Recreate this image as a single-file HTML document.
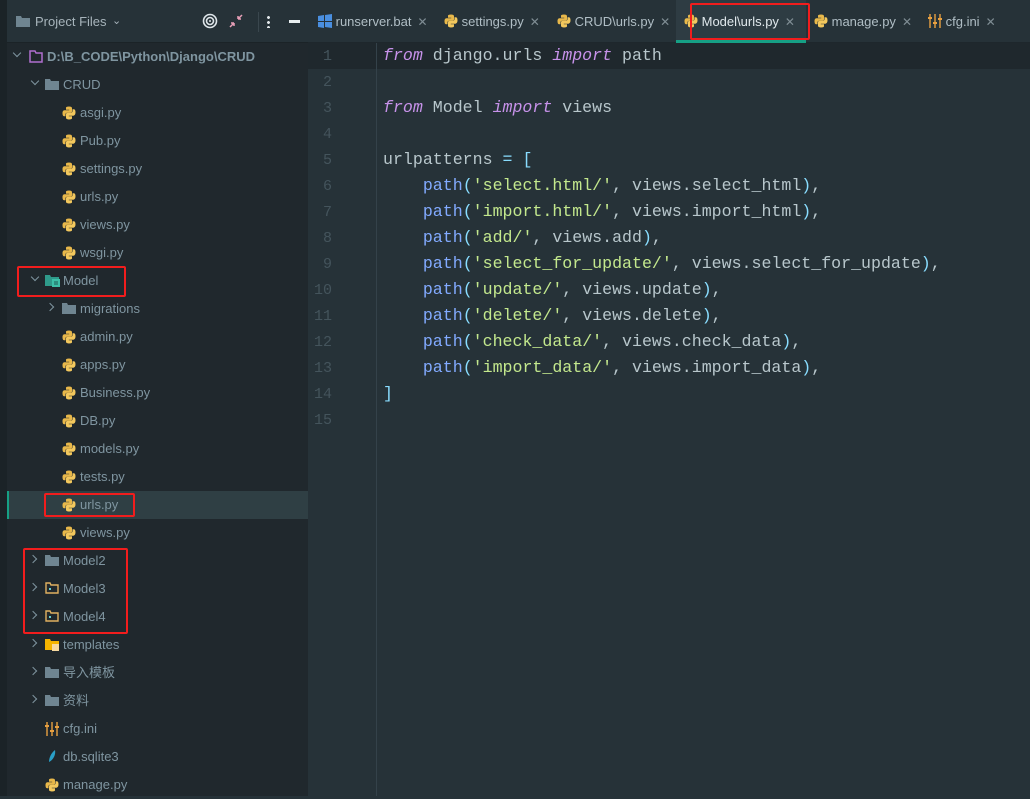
<!DOCTYPE html>
<html><head><meta charset="utf-8"><style>
*{margin:0;padding:0;box-sizing:border-box}
body{width:1030px;height:796px;background:#263238;overflow:hidden;position:relative;font-family:"Liberation Sans","Noto Sans CJK SC",sans-serif}
#strip{position:absolute;left:0;top:0;width:7px;height:796px;background:#1b2327}
#side{position:absolute;left:7px;top:0;width:301px;height:796px;background:#20282d}
#head{position:absolute;left:7px;top:0;width:301px;height:43px;background:#263238;border-bottom:1px solid #1b2327;color:#a7b4bb;font-size:13px}
.row{position:absolute;left:7px;width:301px;height:28px;font-size:13px;color:#7f95a0;line-height:28px}
.row span.t{position:absolute;top:0}
.chev{position:absolute;top:9px;width:6px;height:6px;border-right:1.4px solid #7f95a0;border-bottom:1.4px solid #7f95a0}
.down{transform:rotate(45deg);top:7px}
.right{transform:rotate(-45deg)}
.ic{position:absolute;top:7px}
#tabs{position:absolute;left:308px;top:0;width:722px;height:43px;background:#263238;border-bottom:1px solid #1e272c;font-size:13px;color:#b0bec5}
.tab{position:absolute;top:0;height:43px;line-height:43px}
.x{color:#7f8d94;margin-left:6px;font-size:12px}
#gutter{position:absolute;left:308px;top:43px;width:68px;height:753px;background:#263238}
#vline{position:absolute;left:376px;top:43px;width:1px;height:753px;background:#34424a}
.ln{position:absolute;left:308px;width:24px;text-align:right;font:15px "Liberation Mono",monospace;color:#44545c}
.code{position:absolute;left:383px;font:16.6px "Liberation Mono",monospace;color:#b8c7cc;white-space:pre}
.k{color:#c792ea;font-style:italic}.f{color:#82aaff}.s{color:#c3e88d}.p{color:#89ddff}
.red{position:absolute;border:2px solid #f21d1d;border-radius:2px}
</style></head><body>
<div id="strip"></div>
<div id="side"></div>
<div class="row" style="top:491px;background:#2f3f44;border-left:2px solid #16a085"></div>
<div id="head">
<svg style="position:absolute;left:9px;top:15px" width="14" height="12"><path d="M0 1h5l1 2h8v9H0z" fill="#6f8591"/></svg>
<span style="position:absolute;left:28px;top:14px">Project Files</span>
<span style="position:absolute;left:105px;top:14px;font-size:11px">⌄</span>
<svg style="position:absolute;left:195px;top:13px" width="16" height="16"><circle cx="8" cy="8" r="6.5" fill="none" stroke="#dfe6ea" stroke-width="1.6"/><circle cx="8" cy="8" r="3.5" fill="none" stroke="#dfe6ea" stroke-width="1.6"/><circle cx="8" cy="8" r="1" fill="#dfe6ea"/></svg>
<svg style="position:absolute;left:222px;top:14px" width="14" height="14"><path d="M1 13L5 9M5 9H2M5 9v3M13 1L9 5M9 5h3M9 5V2" stroke="#e8a0b8" stroke-width="1.5" fill="none"/></svg>
<div style="position:absolute;left:251px;top:12px;width:1px;height:20px;background:#3a474e"></div>
<div style="position:absolute;left:260px;top:15px;width:3px;height:13px;background:radial-gradient(circle,#e0e6e9 1.3px,transparent 1.6px) 0 0/3px 5px"></div>
<div style="position:absolute;left:282px;top:20px;width:11px;height:3px;background:#e8eef0"></div>
</div>

<div class="row" style="top:43px;background:#20282d"><div class="chev down" style="left:7px"></div>
<svg class="ic" style="left:22px" width="14" height="13"><path d="M1 1h5l1 2h6v9H1z" fill="none" stroke="#b06fd0" stroke-width="1.5"/></svg>
<span class="t" style="left:40px;font-weight:bold;color:#7f95a0">D:\B_CODE\Python\Django\CRUD</span></div>

<div class="row" style="top:71px"><div class="chev down" style="left:25px"></div>
<svg class="ic" style="left:38px" width="14" height="12"><path d="M0 1h5l1 2h8v9H0z" fill="#6f8591"/></svg><span class="t" style="left:56px">CRUD</span></div>

<div id="rows"></div>

<div class="row" style="top:267px"><div class="chev down" style="left:25px"></div>
<svg class="ic" style="left:38px" width="16" height="13"><path d="M0 1h5l1 2h8v9H0z" fill="#2f9a8a"/><rect x="7" y="5" width="8" height="8" fill="#3cc0a8"/><path d="M9 8h4M9 10h4" stroke="#1e5a55"/></svg><span class="t" style="left:56px">Model</span></div>

<div class="row" style="top:295px"><div class="chev right" style="left:40px"></div>
<svg class="ic" style="left:55px" width="14" height="12"><path d="M0 1h5l1 2h8v9H0z" fill="#6f8591"/></svg><span class="t" style="left:73px">migrations</span></div>

<div class="row" style="top:547px"><div class="chev right" style="left:23px"></div>
<svg class="ic" style="left:38px" width="14" height="12"><path d="M0 1h5l1 2h8v9H0z" fill="#6f8591"/></svg><span class="t" style="left:56px">Model2</span></div>
<div class="row" style="top:575px"><div class="chev right" style="left:23px"></div>
<svg class="ic" style="left:38px" width="14" height="12"><path d="M1 1h4l1 2h7v8H1z" fill="none" stroke="#e0b060" stroke-width="1.4"/><rect x="4" y="6" width="2" height="2" fill="#6cc"/></svg><span class="t" style="left:56px">Model3</span></div>
<div class="row" style="top:603px"><div class="chev right" style="left:23px"></div>
<svg class="ic" style="left:38px" width="14" height="12"><path d="M1 1h4l1 2h7v8H1z" fill="none" stroke="#e0b060" stroke-width="1.4"/><rect x="4" y="6" width="2" height="2" fill="#6cc"/></svg><span class="t" style="left:56px">Model4</span></div>
<div class="row" style="top:631px"><div class="chev right" style="left:23px"></div>
<svg class="ic" style="left:38px" width="14" height="13"><path d="M0 1h5l1 2h8v9H0z" fill="#f5b400"/><rect x="7" y="6" width="7" height="7" fill="#f7d9a0"/></svg><span class="t" style="left:56px">templates</span></div>
<div class="row" style="top:659px"><div class="chev right" style="left:23px"></div>
<svg class="ic" style="left:38px" width="14" height="12"><path d="M0 1h5l1 2h8v9H0z" fill="#6f8591"/></svg><span class="t" style="left:56px">导入模板</span></div>
<div class="row" style="top:687px"><div class="chev right" style="left:23px"></div>
<svg class="ic" style="left:38px" width="14" height="12"><path d="M0 1h5l1 2h8v9H0z" fill="#6f8591"/></svg><span class="t" style="left:56px">资料</span></div>
<div class="row" style="top:715px">
<svg class="ic" style="left:38px" width="14" height="14"><path d="M2 0v14M7 0v14M12 0v14" stroke="#e8a040" stroke-width="1.4"/><path d="M0 4h4M5 9h4M10 5h4" stroke="#e8a040" stroke-width="2"/></svg><span class="t" style="left:56px">cfg.ini</span></div>
<div class="row" style="top:743px">
<svg class="ic" style="left:40px" width="10" height="14"><path d="M8 0C4 3 2 8 2 12L1 14M8 0C9 5 6 10 2 12" fill="#2aa0c8"/></svg><span class="t" style="left:56px">db.sqlite3</span></div>
<div class="row" style="top:771px"><svg class="ic" style="left:38px" width="14" height="14"><use href="#py"/></svg><span class="t" style="left:56px">manage.py</span></div>

<svg width="0" height="0" style="position:absolute"><defs><g id="py"><path d="M7 0.5C3.5 0.5 4 2 4 2v1.7h3.2v.6H2.5S0.5 4.1 0.5 7.3 2.2 10.3 2.2 10.3H3.5V8.5S3.4 6.8 5.2 6.8h3.1s1.7 0 1.7-1.6V2.2S10.2 0.5 7 0.5z" fill="#e8b84a"/><path d="M7 13.5c3.5 0 3-1.5 3-1.5v-1.7H6.8v-.6h4.7s2-.2 2-3.4-1.7-3-1.7-3h-1.3v1.8s.1 1.700-1.7 1.7H5.7S4 6.8 4 8.4v3.4s-.2 1.7 3 1.7z" fill="#f3c85d"/></g></defs></svg>

<div class="red" style="left:17px;top:266px;width:109px;height:31px"></div>
<div class="red" style="left:44px;top:493px;width:91px;height:24px"></div>
<div class="red" style="left:23px;top:548px;width:105px;height:86px"></div>

<div id="tabs">
<div class="tab" style="left:10px"><svg style="vertical-align:-2px" width="14" height="14"><path d="M0 2l6-1v6H0zM7 1l7-1v7H7zM0 8h6v6l-6-1zM7 8h7v6l-7-1z" fill="#4a8fe0"/></svg> runserver.bat<span class="x">✕</span></div>
<div class="tab" style="left:136px"><svg style="vertical-align:-2px" width="14" height="14"><use href="#py"/></svg> settings.py<span class="x">✕</span></div>
<div class="tab" style="left:249px"><svg style="vertical-align:-2px" width="14" height="14"><use href="#py"/></svg> CRUD\urls.py<span class="x">✕</span></div>
<div class="tab" style="left:368px;width:130px;background:#2e3c43;border-bottom:3px solid #16a085;padding-left:8px;color:#e0e8ec"><svg style="vertical-align:-2px" width="14" height="14"><use href="#py"/></svg> Model\urls.py<span class="x">✕</span></div>
<div class="tab" style="left:506px"><svg style="vertical-align:-2px" width="14" height="14"><use href="#py"/></svg> manage.py<span class="x">✕</span></div>
<div class="tab" style="left:620px"><svg style="vertical-align:-2px" width="14" height="14"><path d="M2 0v14M7 0v14M12 0v14" stroke="#e8a040" stroke-width="1.4"/><path d="M0 4h4M5 9h4M10 5h4" stroke="#e8a040" stroke-width="2"/></svg> cfg.ini<span class="x">✕</span></div>
</div>
<div class="red" style="left:690px;top:3px;width:120px;height:37px"></div>

<div id="gutter"></div>
<div style="position:absolute;left:308px;top:43px;width:722px;height:26px;background:#1f282d"></div>
<div id="vline"></div>
<div id="code"></div>
<script>
var files=["asgi.py","Pub.py","settings.py","urls.py","views.py","wsgi.py"],h="";
files.forEach(function(f,i){h+='<div class="row" style="top:'+(99+i*28)+'px"><svg class="ic" style="left:55px" width="14" height="14"><use href="#py"/></svg><span class="t" style="left:73px">'+f+'</span></div>'});
var m=["admin.py","apps.py","Business.py","DB.py","models.py","tests.py","urls.py","views.py"];
m.forEach(function(f,i){h+='<div class="row" style="top:'+(323+i*28)+'px"><svg class="ic" style="left:55px" width="14" height="14"><use href="#py"/></svg><span class="t" style="left:73px">'+f+'</span></div>'});
document.getElementById("rows").innerHTML=h;
var L=['<span class="k">from</span> django.urls <span class="k">import</span> path','','<span class="k">from</span> Model <span class="k">import</span> views','','urlpatterns <span class="p">=</span> <span class="p">[</span>'];
var P=[["select.html/","select_html"],["import.html/","import_html"],["add/","add"],["select_for_update/","select_for_update"],["update/","update"],["delete/","delete"],["check_data/","check_data"],["import_data/","import_data"]];
P.forEach(function(p){L.push('    <span class="f">path</span><span class="p">(</span><span class="s">\''+p[0]+'\'</span>, views.'+p[1]+'<span class="p">)</span>,')});
L.push('<span class="p">]</span>');L.push('');
var c="";
L.forEach(function(l,i){var y=43+i*26;c+='<div class="ln" style="top:'+(y+5)+'px">'+(i+1)+'</div><div class="code" style="top:'+(y+3)+'px">'+l+'</div>'});
document.getElementById("code").innerHTML=c;
</script>
</body></html>
